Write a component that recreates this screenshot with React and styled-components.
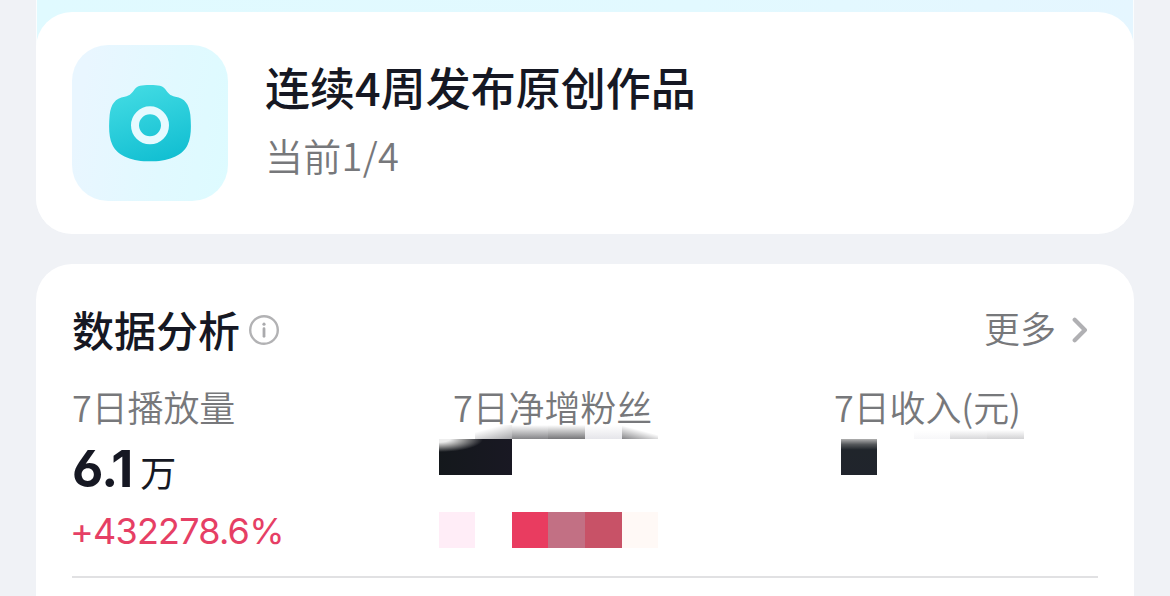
import styled, { createGlobalStyle } from "styled-components";

const GlobalStyle = createGlobalStyle`
  * {
    box-sizing: border-box;
  }

  body {
    margin: 0;
    background: #f0f2f6;
    font-family: "Noto Sans CJK SC", sans-serif;
    color: #161823;
  }
`;

const Page = styled.main`
  height: 596px;
  padding: 0 36px;
  overflow: hidden;
  display: flex;
  flex-direction: column;
  gap: 30px;
`;

const Banner = styled.div`
  padding-top: 12px;
  border: solid #fafdfe;
  border-width: 0 1px;
  border-radius: 0 0 36px 36px;
  background: linear-gradient(90deg, #e0faff, #e2f9ff 60%, #e5f6ff) top / 100%
    50px no-repeat;
`;

const Card = styled.section`
  background: #fff;
  border-radius: 36px;
`;

const TaskCard = styled(Card)`
  height: 222px;
  margin: 0 -1px;
  padding: 33px 36px;
  display: flex;
  gap: 37px;
`;

const IconTile = styled.div`
  width: 156px;
  height: 156px;
  border-radius: 36px;
  display: flex;
  align-items: center;
  justify-content: center;
  background: linear-gradient(100deg, #e9f6ff 10%, #e1f9ff 60%, #ddfbff);
`;

const TaskText = styled.div`
  padding-top: 12px;
  display: flex;
  flex-direction: column;
`;

const Text = styled.span`
  display: block;
  white-space: nowrap;
  font-size: ${(props) => props.$size}px;
  line-height: ${(props) => props.$line}px;
  font-weight: ${(props) => props.$weight || 400};
  letter-spacing: ${(props) => props.$spacing || 0}px;
  color: ${(props) => props.$color || "#161823"};
`;

const MutedText = styled(Text)`
  font-family: "Noto Sans CJK SC DemiLight", "Noto Sans CJK SC", sans-serif;
  font-weight: 350;
  color: #77787b;
`;

const DataCard = styled(Card)`
  flex: none;
  height: 380px;
  padding: 38px 36px 0;
`;

const Header = styled.header`
  height: 56px;
  display: flex;
  align-items: center;
  justify-content: space-between;
`;

const HeaderGroup = styled.div`
  display: flex;
  align-items: center;
  gap: ${(props) => props.$gap}px;
  padding-right: ${(props) => props.$right || 0}px;
`;

const HeaderText = styled.div`
  margin-top: -${(props) => props.$lift}px;
`;

const Stats = styled.div`
  height: 220px;
  padding-top: 26px;
  display: grid;
  grid-template-columns: 381px 381px 1fr;
  border-bottom: 2px solid #e1e1e3;
`;

const Stat = styled.div`
  display: flex;
  flex-direction: column;
  min-width: 0;
  isolation: isolate;
`;

const Value = styled.div`
  height: 78px;
  display: flex;
  align-items: flex-start;
  gap: 9px;
  padding-top: 11px;
`;

const Amount = styled.span`
  font-family: Inter, sans-serif;
  font-size: 51px;
  font-weight: 700;
  line-height: 60px;
  letter-spacing: -2.2px;
  font-feature-settings: "cv03", "ss01";
`;

const Unit = styled(Text)`
  padding-top: 10px;
`;

const Change = styled.span`
  margin-left: -2px;
  padding-top: 1px;
  font-family: Inter, sans-serif;
  font-size: 36px;
  line-height: 48px;
  letter-spacing: -0.8px;
  color: #e63f65;
`;

const Mosaic = styled.div`
  position: relative;
  z-index: -1;
  display: grid;
  grid-template-columns: 36px 37px 36px 37px 37px 36px;
  grid-template-rows: 14px 36px 37px 36px;
  margin-top: -3px;
  margin-left: ${(props) => props.$shift}px;
`;

const Tile = styled.i`
  grid-row: ${(props) => props.$row};
  grid-column: ${(props) => props.$col} / span ${(props) => props.$span || 1};
  background: ${(props) => props.$fill};
`;

const fanTiles = [
  { row: 1, col: 2, fill: "linear-gradient(165deg, #fff 30%, #a5a5a8)" },
  { row: 1, col: 3, fill: "linear-gradient(#fff, #858588)" },
  { row: 1, col: 4, fill: "linear-gradient(#fff, #77777a)" },
  { row: 1, col: 5, fill: "linear-gradient(#fff, #e5e5ea)" },
  { row: 1, col: 6, fill: "linear-gradient(195deg, #fff 42%, #858588)" },
  {
    row: 2,
    col: 1,
    span: 2,
    fill: "radial-gradient(ellipse 44px 13px at 0 0, #eee 25%, #999 55%, transparent), linear-gradient(90deg, #14181c, #191823)",
  },
  { row: 4, col: 1, fill: "#ffedf7" },
  { row: 4, col: 3, fill: "#e93c60" },
  { row: 4, col: 4, fill: "#c27084" },
  { row: 4, col: 5, fill: "#c85267" },
  { row: 4, col: 6, fill: "#fff9f6" },
];

const incomeTiles = [
  { row: 1, col: 3, fill: "linear-gradient(#fff 40%, #f7f7f9)" },
  { row: 1, col: 4, fill: "linear-gradient(#fff 35%, #d8d8da)" },
  { row: 1, col: 5, fill: "linear-gradient(#fff 35%, #d2d2d4)" },
  {
    row: 2,
    col: 1,
    fill: "linear-gradient(#b0b0b0, #55585b 15%, #20252b 30%, #20242c)",
  },
];

function CameraIcon() {
  return (
    <svg width="82" height="77" viewBox="327 254 246 231">
      <defs>
        <linearGradient id="camera" x1="0.3" y1="0" x2="0.65" y2="1">
          <stop offset="0" stopColor="#42dbe3" />
          <stop offset="1" stopColor="#12bfd2" />
        </linearGradient>
      </defs>
      <path
        fill="url(#camera)"
        d="M450 254C477 254 487 256 496 267C505 279 509 286 526 289C555 294 567 311 571 343C574 378 574 411 563 433C546 469 500 483 450 483C400 483 354 469 337 433C326 411 326 378 329 343C333 311 345 294 374 289C391 286 395 279 404 267C413 256 423 254 450 254Z"
      />
      <circle
        cx="450"
        cy="375"
        r="45"
        fill="none"
        stroke="#e6faff"
        strokeWidth="24"
      />
    </svg>
  );
}

function InfoIcon() {
  return (
    <svg width="30" height="30" viewBox="0 0 30 30">
      <circle
        cx="15"
        cy="15"
        r="13.8"
        fill="none"
        stroke="#b2b2b4"
        strokeWidth="2.4"
      />
      <circle cx="15" cy="9.2" r="1.6" fill="#aaaaad" />
      <path
        d="M15 13.7V21.3"
        stroke="#aaaaad"
        strokeWidth="2.8"
        strokeLinecap="round"
      />
    </svg>
  );
}

function ChevronIcon() {
  return (
    <svg width="16" height="26" viewBox="0 0 16 26">
      <path
        d="M2.7 2.8L12.9 13L2.7 23.2"
        fill="none"
        stroke="#b0b0b3"
        strokeWidth="4.2"
        strokeLinecap="round"
        strokeLinejoin="round"
      />
    </svg>
  );
}

function HiddenValue({ tiles, shift }) {
  return (
    <Mosaic $shift={shift}>
      {tiles.map((tile) => (
        <Tile
          key={`${tile.row}-${tile.col}`}
          $row={tile.row}
          $col={tile.col}
          $span={tile.span}
          $fill={tile.fill}
        />
      ))}
    </Mosaic>
  );
}

function StatLabel({ children }) {
  return (
    <MutedText $size={36} $line={44} $spacing={-0.1}>
      {children}
    </MutedText>
  );
}

function App() {
  return (
    <>
      <GlobalStyle />
      <Page>
        <Banner>
          <TaskCard>
            <IconTile>
              <CameraIcon />
            </IconTile>
            <TaskText>
              <Text $size={45} $line={60} $weight={500}>
                连续4周发布原创作品
              </Text>
              <MutedText $size={38} $line={75} $spacing={0.3}>
                当前1/4
              </MutedText>
            </TaskText>
          </TaskCard>
        </Banner>
        <DataCard>
          <Header>
            <HeaderGroup $gap={9}>
              <HeaderText $lift={2}>
                <Text $size={42} $line={56} $weight={500}>
                  数据分析
                </Text>
              </HeaderText>
              <InfoIcon />
            </HeaderGroup>
            <HeaderGroup $gap={16} $right={10}>
              <HeaderText $lift={6}>
                <MutedText $size={36} $line={56}>
                  更多
                </MutedText>
              </HeaderText>
              <ChevronIcon />
            </HeaderGroup>
          </Header>
          <Stats>
            <Stat>
              <StatLabel>7日播放量</StatLabel>
              <Value>
                <Amount>6.1</Amount>
                <Unit $size={36} $line={44}>
                  万
                </Unit>
              </Value>
              <Change>+432278.6%</Change>
            </Stat>
            <Stat>
              <StatLabel>7日净增粉丝</StatLabel>
              <HiddenValue tiles={fanTiles} shift={-14} />
            </Stat>
            <Stat>
              <StatLabel>7日收入(元)</StatLabel>
              <HiddenValue tiles={incomeTiles} shift={7} />
            </Stat>
          </Stats>
        </DataCard>
      </Page>
    </>
  );
}

export default App;
